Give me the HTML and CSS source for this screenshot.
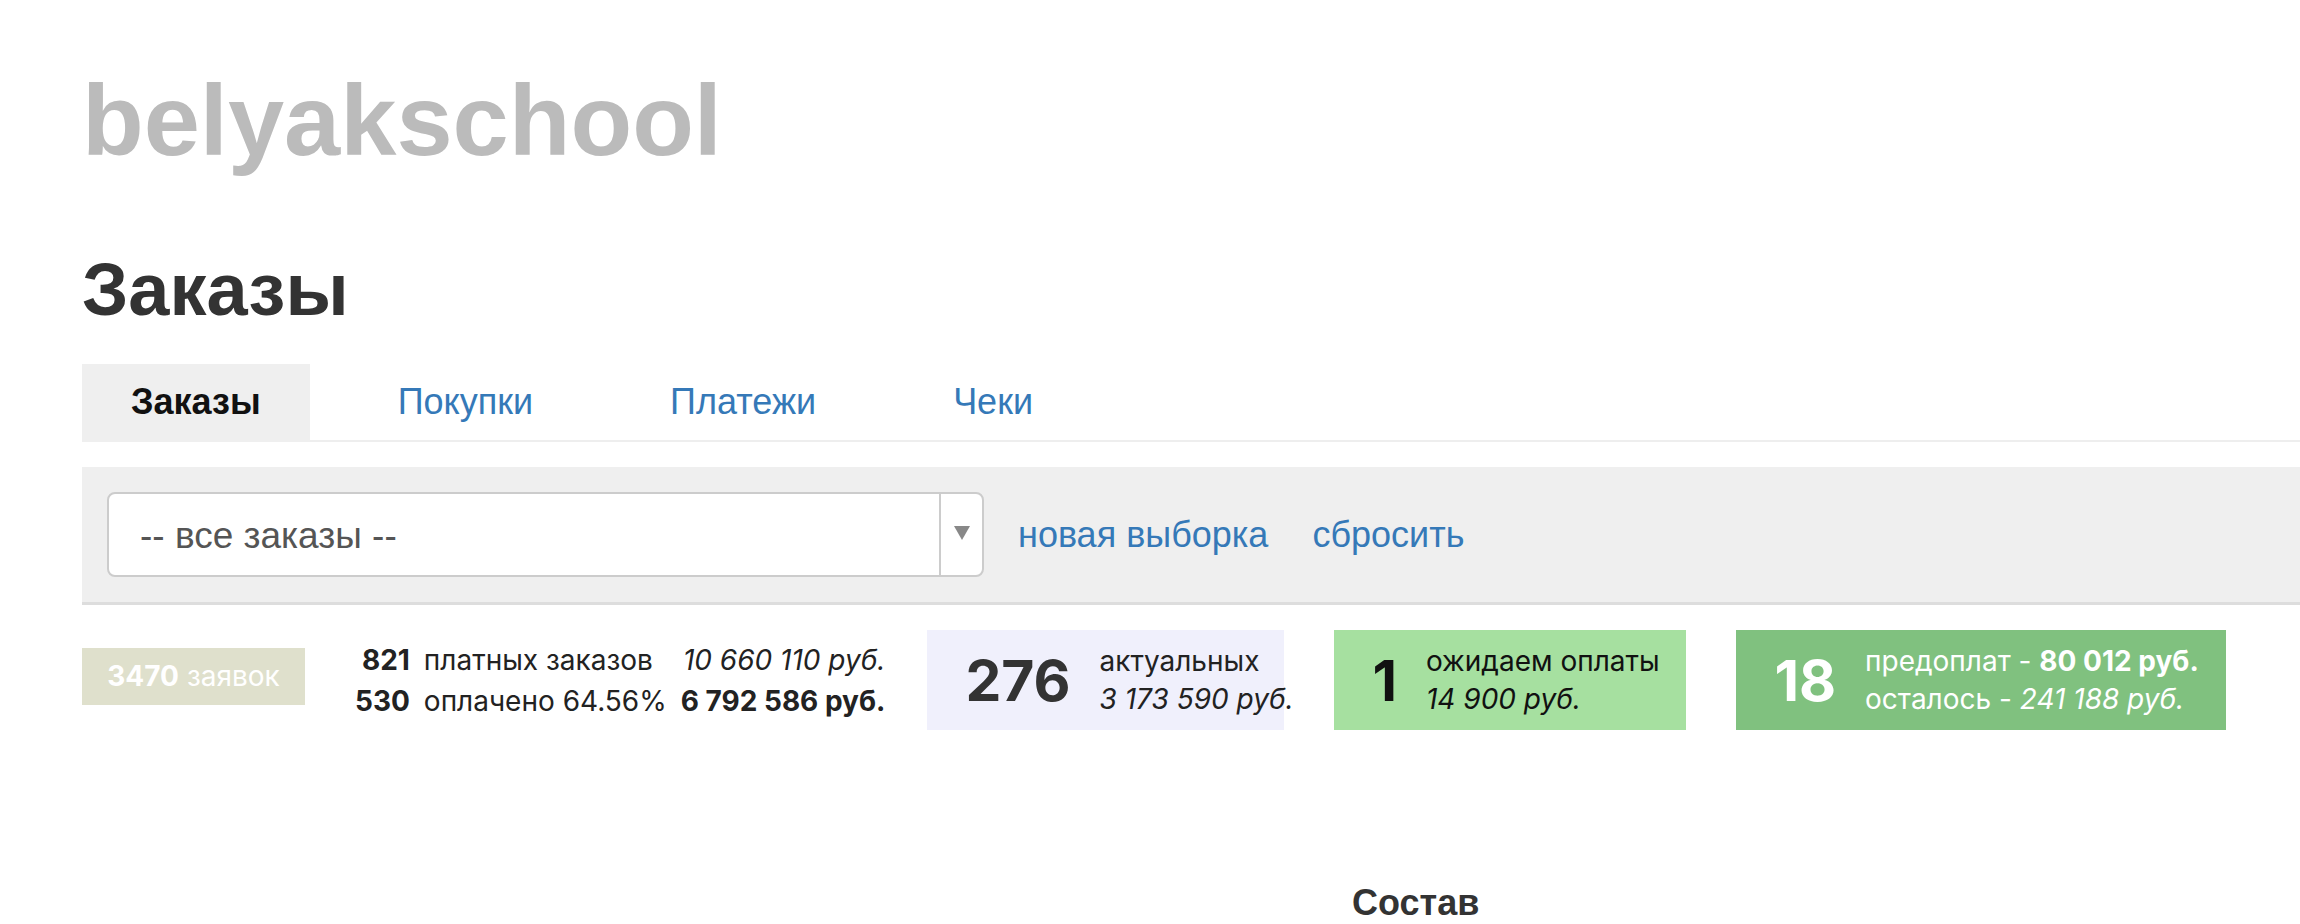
FILE: index.html
```html
<!DOCTYPE html>
<html lang="ru">
<head>
  <meta charset="UTF-8" />
  <title>Заказы — belyakschool</title>
  <link rel="stylesheet" href="styles.css">
</head>
<body>
  <div class="brand">belyakschool</div>
  <h1>Заказы</h1>

  <ul class="tabs">
    <li class="active"><a href="#">Заказы</a></li>
    <li><a href="#">Покупки</a></li>
    <li><a href="#">Платежи</a></li>
    <li><a href="#">Чеки</a></li>
  </ul>

  <div class="filter">
    <div class="select">
      <span class="select-value">-- все заказы --</span>
      <span class="select-arrow"></span>
    </div>
    <a href="#" class="filter-link">новая выборка</a>
    <a href="#" class="filter-link">сбросить</a>
  </div>

  <div class="stats">
    <div class="badge"><b>3470</b> заявок</div>
    <table class="totals">
      <tr>
        <td class="num">821</td>
        <td>платных заказов</td>
        <td class="sum"><i>10 660 110 руб.</i></td>
      </tr>
      <tr>
        <td class="num">530</td>
        <td>оплачено 64.56%</td>
        <td class="sum"><b>6 792 586 руб.</b></td>
      </tr>
    </table>
    <div class="box box-actual">
      <div class="box-num">276</div>
      <div class="box-text">актуальных<br><i>3 173 590 руб.</i></div>
    </div>
    <div class="box box-wait">
      <div class="box-num">1</div>
      <div class="box-text">ожидаем оплаты<br><i>14 900 руб.</i></div>
    </div>
    <div class="box box-prepaid">
      <div class="box-num">18</div>
      <div class="box-text">предоплат - <b>80 012 руб.</b><br>осталось - <i>241 188 руб.</i></div>
    </div>
  </div>

  <div class="list-head">
    <span class="col-items">Состав</span>
  </div>
</body>
</html>
```

FILE: styles.css
```css
body {
  margin: 0;
  padding: 0 0 0 82px;
  font-family: 'Liberation Sans', Arial, sans-serif;
  color: #333;
  background: #fff;
  overflow: hidden;
}
a {
  color: #3579b8;
  text-decoration: none;
}
.brand {
  margin-top: 70px;
  font-size: 101px;
  line-height: 100px;
  font-weight: bold;
  color: #bbb;
}
h1 {
  margin: 84px 0 0;
  font-size: 74px;
  line-height: 72px;
  color: #333;
}
.tabs {
  display: flex;
  list-style: none;
  margin: 38px 0 0;
  padding: 0;
  border-bottom: 2px solid #eee;
}
.tabs li {
  margin-right: 39px;
}
.tabs a {
  display: block;
  padding: 0 49px 2px;
  height: 76px;
  line-height: 76px;
  font-size: 36px;
  margin-bottom: -2px;
}
.tabs .active a {
  background: #efefef;
  color: #111;
  font-weight: bold;
}
.filter {
  display: flex;
  align-items: center;
  margin-top: 25px;
  padding: 25px;
  background: #efefef;
  border-bottom: 3px solid #ddd;
}
.select {
  display: flex;
  width: 877px;
  height: 85px;
  box-sizing: border-box;
  background: #fff;
  border: 2px solid #ccc;
  border-radius: 8px;
}
.select-value {
  flex: 1;
  padding-left: 31px;
  line-height: 83px;
  font-size: 37px;
  color: #555;
}
.select-arrow {
  width: 43px;
  border-left: 2px solid #ccc;
  display: flex;
  justify-content: center;
  padding-top: 32px;
  box-sizing: border-box;
}
.select-arrow::after {
  content: "";
  border-left: 8px solid transparent;
  border-right: 8px solid transparent;
  border-top: 14px solid #888;
  height: 0;
}
.filter-link {
  margin-left: 34px;
  font-size: 36px;
}
.filter-link + .filter-link {
  margin-left: 44px;
}
.stats {
  display: flex;
  align-items: center;
  margin-top: 25px;
  height: 100px;
  font-family: Inter, 'Noto Sans', sans-serif;
  font-size: 28px;
  color: #222;
}
.badge {
  box-sizing: border-box;
  width: 223px;
  text-align: center;
  background: #dfe0cc;
  color: #fff;
  height: 57px;
  line-height: 57px;
  margin: 0 50px 8px 0;
}
.totals {
  border-collapse: collapse;
  margin-right: 42px;
}
.totals td {
  padding: 0;
  height: 41px;
  white-space: nowrap;
}
.totals .num {
  text-align: right;
  font-weight: bold;
  padding-right: 14px;
}
.totals .sum {
  text-align: right;
  padding-left: 14px;
}
.box {
  box-sizing: border-box;
  display: flex;
  align-items: center;
  height: 100px;
  padding-left: 38px;
  margin-right: 50px;
}
.box-num {
  font-size: 57px;
  font-weight: bold;
  margin-right: 29px;
}
.box-text {
  line-height: 38px;
  white-space: nowrap;
}
.box-actual {
  width: 357px;
  background: #f0f0fc;
}
.box-actual .box-num {
  color: #333;
}
.box-wait {
  width: 352px;
  background: #a6e0a0;
  color: #111;
}
.box-prepaid {
  width: 490px;
  background: #80c17f;
  color: #fff;
}
.list-head {
  margin-top: 152px;
  padding-left: 1270px;
}
.col-items {
  font-size: 36px;
  font-weight: bold;
  color: #333;
}
```
